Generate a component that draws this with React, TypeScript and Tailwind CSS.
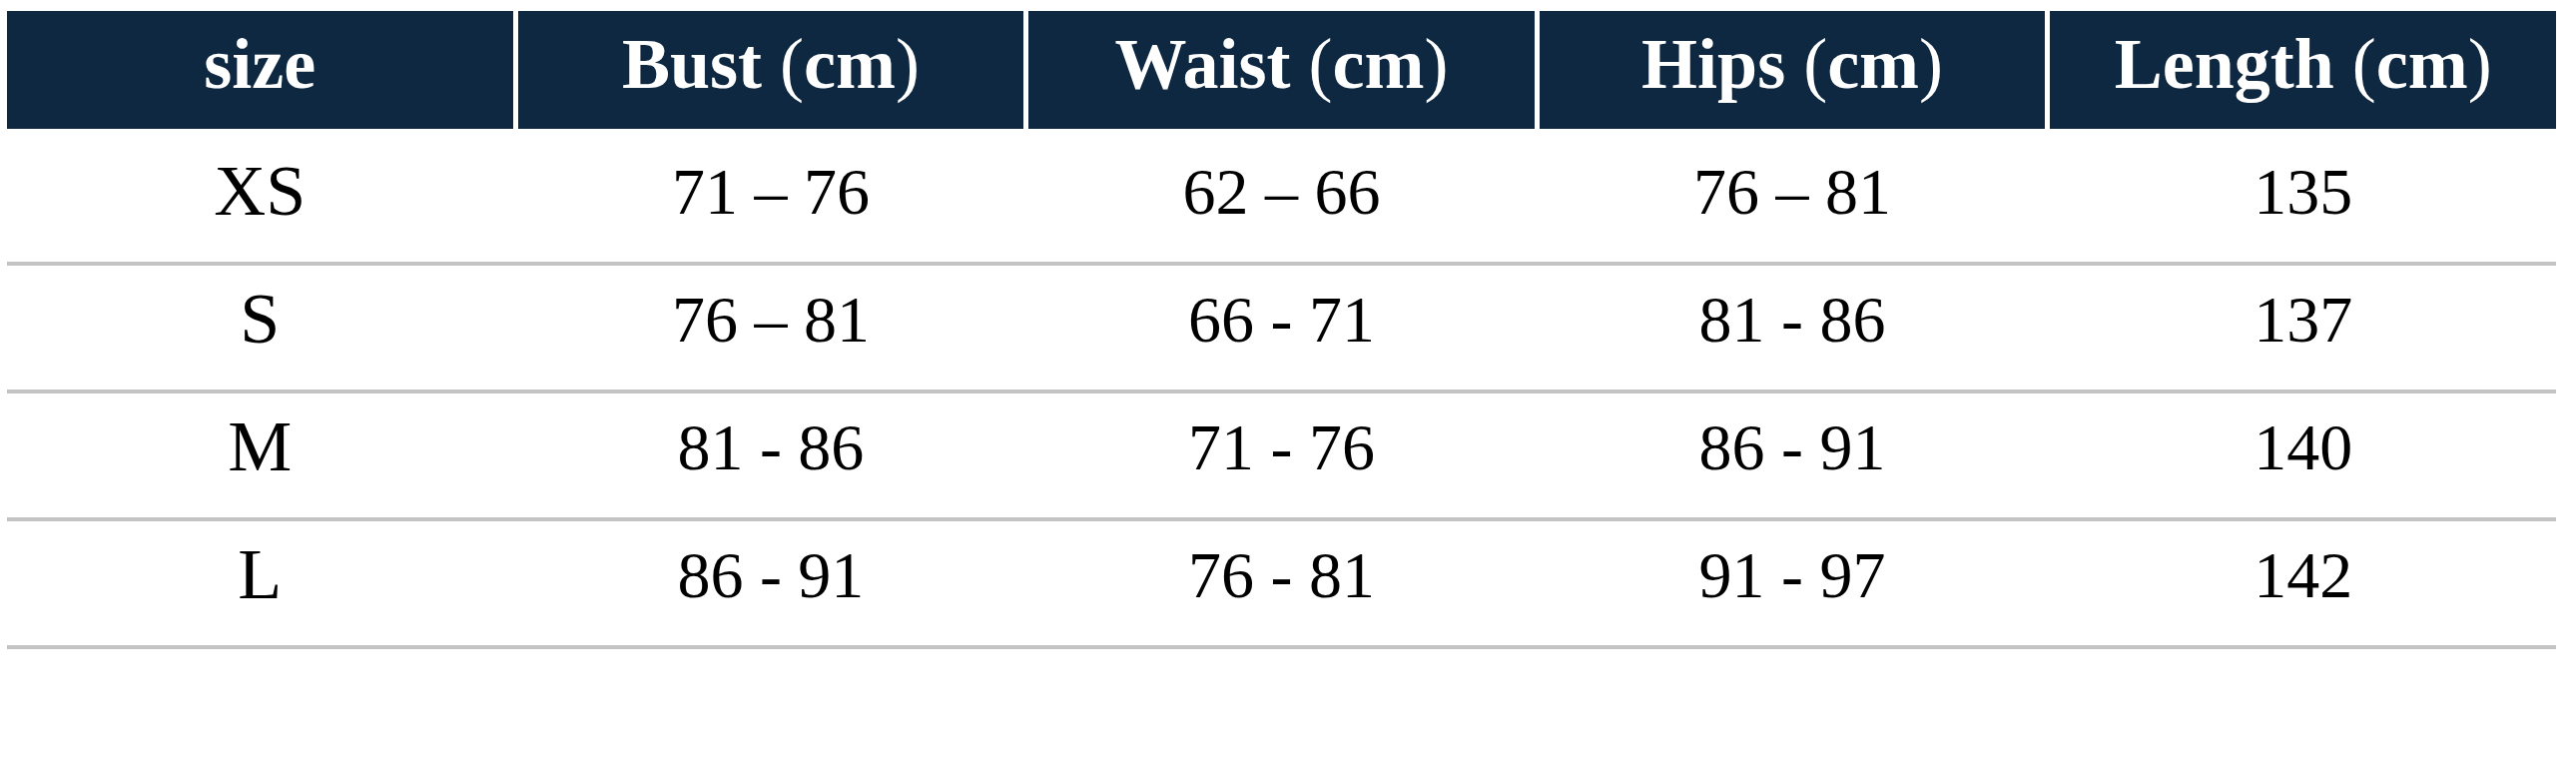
import React from "react";

const headers = ["size", "Bust", "Waist", "Hips", "Length"];

const rows: string[][] = [
  ["XS", "71 – 76", "62 – 66", "76 – 81", "135"],
  ["S", "76 – 81", "66 - 71", "81 - 86", "137"],
  ["M", "81 - 86", "71 - 76", "86 - 91", "140"],
  ["L", "86 - 91", "76 - 81", "91 - 97", "142"],
];

export default function App() {
  return (
    <div
      className="min-h-[783px] w-[2580px] bg-white pl-[7px] pr-[20px]"
      style={{ fontFamily: '"Liberation Serif", "Times New Roman", serif' }}
    >
      {/* Header */}
      <div className="mt-[11px] mb-[9px] grid h-[118px] grid-cols-5 gap-x-[5px]">
        {headers.map((h, i) => (
          <div
            key={h}
            className="flex items-center justify-center bg-[#0f2841] pb-[12px] text-[72px] font-bold leading-none text-white"
          >
            {h}
            {i > 0 && (
              <>
                <span className="w-[18px]" />
                <span className="font-normal">(</span>
                <span>cm</span>
                <span className="font-normal">)</span>
              </>
            )}
          </div>
        ))}
      </div>

      {/* Rows */}
      {rows.map((row) => (
        <div
          key={row[0]}
          className="grid h-[128px] grid-cols-5 gap-x-[5px] border-b-4 border-[#c3c3c3]"
        >
          {row.map((cell, i) => (
            <div
              key={i}
              className={`flex items-center justify-center leading-none text-black ${
                i === 0 ? "pb-[18px] text-[72px]" : "pb-[16px] text-[66px]"
              }`}
            >
              {cell}
            </div>
          ))}
        </div>
      ))}
    </div>
  );
}
